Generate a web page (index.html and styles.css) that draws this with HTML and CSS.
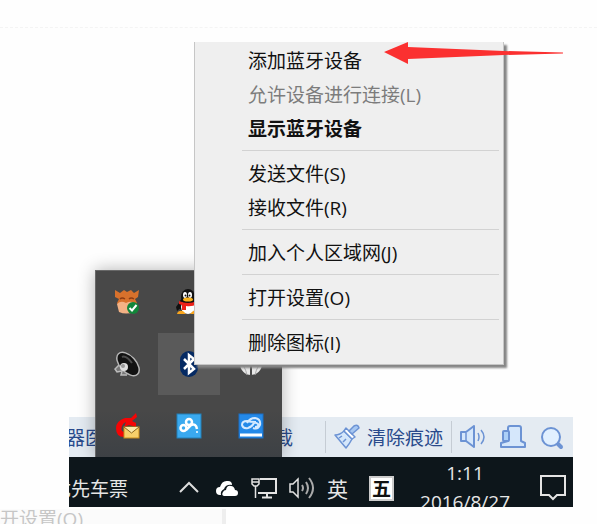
FILE: index.html
```
<!DOCTYPE html>
<html lang="zh-CN">
<head>
    <meta charset="UTF-8">
    <meta name="viewport" content="width=device-width, initial-scale=1.0">
    <title>添加蓝牙设备</title>
    <link rel="stylesheet" href="styles.css">
</head>
<body>
    <hr class="divider">

    <div class="screen">
        <div class="desktop">
            <div class="menu" role="menu">
                <button type="button" role="menuitem">添加蓝牙设备</button>
                <button type="button" role="menuitem" disabled>允许设备进行连接(L)</button>
                <button type="button" role="menuitem" class="default">显示蓝牙设备</button>
                <div class="separator"></div>
                <button type="button" role="menuitem">发送文件(S)</button>
                <button type="button" role="menuitem">接收文件(R)</button>
                <div class="separator"></div>
                <button type="button" role="menuitem">加入个人区域网(J)</button>
                <div class="separator"></div>
                <button type="button" role="menuitem">打开设置(O)</button>
                <div class="separator"></div>
                <button type="button" role="menuitem">删除图标(I)</button>
            </div>

            <svg class="arrow" width="180" height="22" viewBox="0 0 180 22">
                <path d="M0 10L24 0V5L120 9L179 10.500V11.500L120 13L24 17V22Z" fill="#fb3030"/>
            </svg>

            <!-- hidden icons flyout -->
            <div class="flyout">
                <button type="button" aria-label="安全助手">
                    <svg width="26" height="26" viewBox="0 0 26 26">
                        <path d="M1 1L6 4L10 1L13 3L17 1L20 4L25 1L24 8L21 10L23 14L20 18H5L3 14L5 10L1 8Z" fill="#d8712c"/>
                        <path d="M6 10q2-2 5 0M15 10q2-2 5 0" fill="none" stroke="#8c3c14" stroke-width="1.500"/>
                        <path d="M3 15Q7 11 12 14Q18 11 21 15L20 23Q12 26 5 23Z" fill="#f3b285"/>
                        <circle cx="19" cy="19" r="6" fill="#12863a"/>
                        <path d="M15.500 19L18 21.500L22.500 16" fill="none" stroke="#fff" stroke-width="2"/>
                    </svg>
                </button>
                <button type="button" aria-label="QQ">
                    <svg width="26" height="26" viewBox="0 0 26 26">
                        <path d="M5 11L0 18L1 22L6 18ZM21 11L25 18L24 22L20 18Z" fill="#111"/>
                        <ellipse cx="12" cy="16" rx="9" ry="9" fill="#111"/>
                        <ellipse cx="12" cy="18" rx="7" ry="7" fill="#fff"/>
                        <ellipse cx="12" cy="8" rx="7" ry="8" fill="#111"/>
                        <ellipse cx="9" cy="6" rx="2" ry="3" fill="#fff"/>
                        <ellipse cx="14" cy="6" rx="2" ry="3" fill="#fff"/>
                        <circle cx="9.500" cy="6.500" r="1" fill="#111"/>
                        <circle cx="13.500" cy="6.500" r="1" fill="#111"/>
                        <ellipse cx="12" cy="10.500" rx="5" ry="2" fill="#f9b21c"/>
                        <path d="M3 12Q12 16 21 12V15Q16 18 10 17V21H6V16L3 15Z" fill="#ec2118"/>
                        <path d="M1 25Q2 21 7 22L10 25ZM23 25Q22 21 17 22L14 25Z" fill="#f9a51c"/>
                    </svg>
                </button>
                <button type="button" aria-label="网络助手"></button>
                <button type="button" aria-label="音频管理器">
                    <svg width="26" height="26" viewBox="0 0 26 26">
                        <path d="M5 14L1 18L3 21L8 20L7 24H13" fill="#777" stroke="#bbb" stroke-width="1.500"/>
                        <ellipse cx="14" cy="13" rx="14" ry="8" transform="rotate(47 14 13)" fill="#121212" stroke="#b5b5b5" stroke-width="1.500"/>
                        <path d="M8 6Q12 4 18 12" fill="none" stroke="#4c4c4c" stroke-width="2"/>
                        <circle cx="10" cy="16" r="4" fill="#dedede"/>
                        <circle cx="9" cy="15" r="2" fill="#999"/>
                    </svg>
                </button>
                <button type="button" class="active" aria-label="蓝牙">
                    <svg width="26" height="26" viewBox="0 0 26 26">
                        <rect x="4" y="0" width="18" height="26" rx="9" fill="#052a63"/>
                        <path d="M8 8L18 18L13 22V4L18 8L8 18" fill="none" stroke="#fff" stroke-width="2.500"/>
                    </svg>
                </button>
                <button type="button" aria-label="连接">
                    <svg width="26" height="26" viewBox="0 0 26 26">
                        <circle cx="13" cy="13" r="11" fill="#e8e8e8"/>
                        <path d="M13 1V25" stroke="#4a4a4a" stroke-width="2"/>
                        <path d="M2 11Q7 15 9 24M24 11Q19 15 17 24" fill="none" stroke="#aaa"/>
                    </svg>
                </button>
                <button type="button" aria-label="邮件">
                    <svg width="26" height="26" viewBox="0 0 26 26">
                        <path d="M22 0L17 5H11Q2 8 2 15Q2 24 10 24V19Q6 18 8 13Q9 10 12 9L10 14L15 12L22 14V10L18 8L23 4Z" fill="#f50505"/>
                        <rect x="10" y="14" width="15" height="11" fill="#f7d06a" stroke="#c98c18"/>
                        <path d="M10 14L17.500 20L25 14" fill="#fce9a8" stroke="#8c671e"/>
                    </svg>
                </button>
                <button type="button" aria-label="同步">
                    <svg width="26" height="26" viewBox="0 0 26 26">
                        <rect x="1" y="1" width="24" height="24" fill="#3aa9ef" stroke="#2380b8"/>
                        <circle cx="7.500" cy="15" r="3" fill="none" stroke="#fff" stroke-width="2.500"/>
                        <circle cx="13" cy="9" r="3" fill="none" stroke="#fff" stroke-width="2.500"/>
                        <path d="M10 17L15 12Q20 10 21 16" fill="none" stroke="#fff" stroke-width="2.500"/>
                        <circle cx="21" cy="19" r="1" fill="#fff"/>
                    </svg>
                </button>
                <button type="button" aria-label="云盘">
                    <svg width="26" height="26" viewBox="0 0 26 26">
                        <rect x="1" y="1" width="24" height="24" fill="#2489e8" stroke="#1b6fc4"/>
                        <path d="M18 9Q12 9 9 8Q4 8 4 12Q5 16 10 15Q14 14 16 10Q18 9 20 11Q21 14 17 14M9 10Q12 5 17 5Q23 6 22 12Q20 17 15 15" fill="none" stroke="#d5eaff" stroke-width="2"/>
                        <path d="M2 22H24" stroke="#fff" stroke-width="3"/>
                    </svg>
                </button>
            </div>
        </div>

        <div class="statusbar">
            <span class="doctor">器医</span>
            <span class="download">载</span>
            <div class="tools">
                <button type="button" class="clean">
                    <svg width="26" height="26" viewBox="0 0 26 26" fill="#d5e7fb" stroke="#6c93d4" stroke-width="1.500" stroke-linejoin="round">
                        <path d="M1 11Q6 11 10 7L18 15Q16 19 12 24Z"/>
                        <path d="M10 7L12 4L21 13L18 15Z" fill="#fff"/>
                        <path d="M15 7L20 2Q24 0 25 4L18 10Z" fill="#a6c7f2"/>
                        <path d="M5 14L8 12M9 18L12 15" fill="none"/>
                    </svg>
                    清除痕迹
                </button>
                <button type="button" class="icon first" aria-label="声音">
                    <svg width="26" height="24" viewBox="0 0 26 24" fill="#d5e7fb" stroke="#6c93d4" stroke-width="2" stroke-linejoin="round">
                        <path d="M1 7H6L14 1V22L6 16H1Z"/>
                        <path d="M6 8V16M18 8Q20 12 18 16M21 5Q27 12 21 19" fill="none" stroke-width="1.500"/>
                    </svg>
                </button>
                <button type="button" class="icon" aria-label="窗口">
                    <svg width="26" height="24" viewBox="0 0 26 24" fill="#d5e7fb" stroke="#6c93d4" stroke-width="2" stroke-linejoin="round">
                        <path d="M8 3Q8 1 10 1H19Q21 1 21 3V16L25 18V22H1V18L8 16Z"/>
                        <rect x="3" y="6" width="6" height="10" rx="1" fill="#acd0f8"/>
                    </svg>
                </button>
                <button type="button" class="icon" aria-label="缩放">
                    <svg width="24" height="26" viewBox="0 0 24 26" stroke="#6c93d4">
                        <path d="M17 19L21 23" stroke-width="4" stroke-linecap="round"/>
                        <circle cx="11" cy="13" r="9" fill="#e1f0ff" stroke-width="2"/>
                    </svg>
                </button>
            </div>
        </div>

        <div class="taskbar">
            <div class="taskbar-inner">
                <div class="task">优先车票</div>
                <div class="tray">
                    <button type="button" class="chevron" aria-label="显示隐藏的图标">
                        <svg width="20" height="22" viewBox="0 0 20 22">
                            <path d="M1 15L10 6L19 15" fill="none" stroke="#ddd" stroke-width="2"/>
                        </svg>
                    </button>
                    <button type="button" aria-label="OneDrive">
                        <svg width="24" height="22" viewBox="0 0 24 22">
                            <path d="M5 18Q1 18 1 14Q1 10 5 10Q7 3 13 4Q17 4 17 8Q11 7 9 12Q5 14 6 18Z" fill="#fff"/>
                            <path d="M9 19Q6 18 8 15Q9 13 11 13Q12 8 16 9Q19 9 20 13Q23 13 23 16Q23 19 20 19Z" fill="#fff"/>
                        </svg>
                    </button>
                    <button type="button" aria-label="网络">
                        <svg width="26" height="22" viewBox="0 0 26 22" fill="none" stroke="#e4e4e4" stroke-width="2">
                            <path d="M9 2H25V16H7M16 16V20M11 20.500H21"/>
                            <path d="M1 2H8V7L6 9H3L1 7ZM1 5H8M4.500 9V21" stroke-width="1.500"/>
                        </svg>
                    </button>
                    <button type="button" aria-label="音量">
                        <svg width="26" height="24" viewBox="0 0 26 24" fill="none" stroke="#e4e4e4" stroke-width="2">
                            <path d="M1 8H4L9 3V21L4 16H1Z" stroke-width="1.500"/>
                            <path d="M13 9Q15 12 13 15M17 6Q21 12 17 18M20 2Q28 12 20 22" stroke="#aaa"/>
                        </svg>
                    </button>
                    <button type="button" class="lang">英</button>
                    <button type="button" class="ime">五</button>
                    <time class="clock" datetime="2016-08-27T01:11">1:11<br>2016/8/27</time>
                    <button type="button" aria-label="通知">
                        <svg width="26" height="26" viewBox="0 0 26 26">
                            <path d="M1 1H25V20H17L13 24L9 20H1Z" fill="none" stroke="#e4e4e4" stroke-width="2"/>
                        </svg>
                    </button>
                </div>
            </div>
        </div>
    </div>

    <div class="next-menu">开设置(O)</div>
</body>
</html>
```
FILE: styles.css
```
body {
    margin: 0;
    overflow: hidden;
    background-color: #fefefe;
    font-family: "Open Sans", "Noto Sans CJK SC", sans-serif;
    font-size: 19px;
}
button {
    display: flex;
    align-items: center;
    padding: 0;
    border: none;
    background: none;
    color: inherit;
    font: inherit;
    white-space: nowrap;
}
svg {
    display: block;
    flex: none;
}
.divider {
    margin: 27px 0 14px;
    border: none;
    border-top: 1px dashed #f4f4f4;
}
.screen {
    margin: 0 24px 0 69px;
}
.desktop {
    position: relative;
    padding: 0 69px 52px 125px;
}

/* context menu */
.menu {
    position: relative;
    z-index: 2;
    padding: 1px 4px 5px 47px;
    border: 1px solid #c6c6c6;
    border-top: none;
    background-color: #efefef;
    box-shadow: 3px 3px 2px #858585;
    clip-path: inset(0 -8px -8px 0);
}
.menu button {
    width: 100%;
    height: 34px;
    padding-left: 6px;
    color: #111;
}
.menu button:disabled {
    color: #7c7c7c;
}
.menu .default {
    font-weight: bold;
}
.separator {
    height: 1px;
    margin: 5px 0;
    background-color: #d2d2d2;
}
.arrow {
    position: absolute;
    z-index: 3;
    top: 0;
    right: 9px;
}

/* hidden icons */
.flyout {
    position: absolute;
    z-index: 1;
    left: 26px;
    bottom: -40px;
    display: grid;
    grid-template-columns: repeat(3, 62px);
    grid-auto-rows: 62px;
    border: 1px solid #686868;
    border-width: 1px 0 0 1px;
    background: linear-gradient(#484848 75%, #3d4145);
    box-shadow: 0 0 16px rgba(0,0,0,0.3);
}
.flyout button {
    justify-content: center;
}
.flyout .active {
    background-color: #5a5a5a;
}

/* browser status bar */
.statusbar {
    display: flex;
    align-items: center;
    height: 40px;
    overflow: hidden;
    background-color: #e4ebf2;
    color: #294a8c;
}
.doctor {
    flex: none;
    width: 52px;
    margin-left: -3px;
}
.download {
    margin-left: 156px;
}
.tools {
    display: flex;
    align-items: center;
    margin-left: auto;
    padding-right: 9px;
}
.clean {
    gap: 7px;
    height: 32px;
    padding: 0 8px;
    border-left: 1px solid #c5ccd4;
    border-right: 1px solid #c5ccd4;
}
.icon {
    margin-left: 14px;
}
.icon.first {
    margin-left: 8px;
}

/* taskbar, lower edge is cut off */
.taskbar {
    position: relative;
    z-index: 1;
    height: 50px;
    overflow: hidden;
    background-color: #0d161b;
    color: #e6e6e6;
}
.taskbar-inner {
    display: flex;
    align-items: center;
    height: 62px;
}
.task {
    display: flex;
    justify-content: flex-end;
    width: 59px;
    overflow: hidden;
    white-space: nowrap;
}
.tray {
    display: flex;
    align-items: center;
    gap: 12px;
    margin-left: auto;
    padding-right: 7px;
}
.chevron {
    padding-right: 4px;
}
.lang {
    font-size: 21px;
}
.ime {
    justify-content: center;
    width: 25px;
    height: 25px;
    margin: 0 14px 0 9px;
    box-sizing: border-box;
    border: 2px solid #ccc;
    background-color: #fff;
    color: #111;
    font-weight: bold;
}
.clock {
    margin-right: 18px;
    line-height: 29px;
    text-align: center;
}

.next-menu {
    width: 222px;
    height: 15px;
    margin-top: 2px;
    overflow: hidden;
    border-right: 4px solid #eee;
    background-color: #fbfbfb;
    color: #c6c6c6;
    line-height: 20px;
}
```
